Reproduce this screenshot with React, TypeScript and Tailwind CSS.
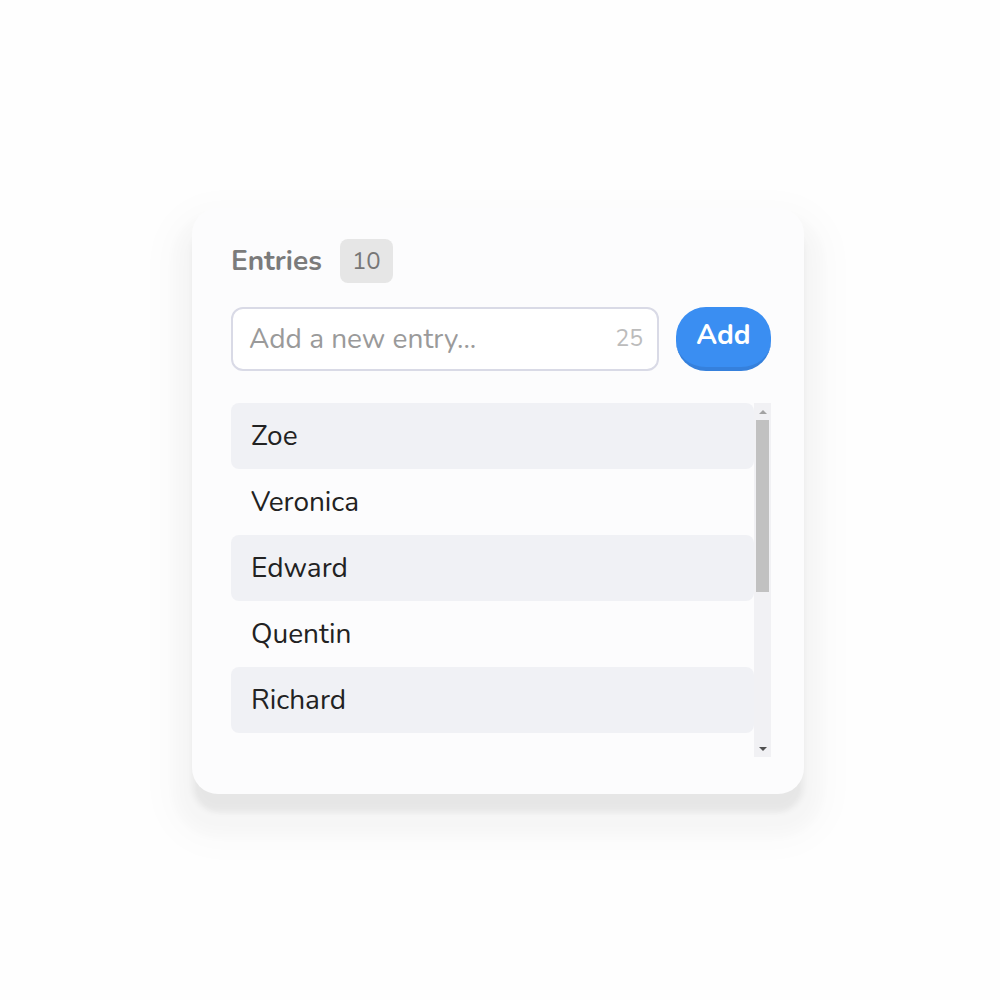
const entries = ['Zoe', 'Veronica', 'Edward', 'Quentin', 'Richard', 'Nina', 'Bruno', 'Clara', 'Dmitri', 'Fiona'];

export default function App() {
  return (
    <div className="w-[1000px] h-[1000px] bg-[#fefefe] pt-[208px] pl-[192px] font-['Nunito','Lato',sans-serif]">
      <div className="w-[612px] h-[586px] bg-[#fcfcfd] rounded-[26px] shadow-[0_18px_6px_rgba(0,0,0,0.055),0_24px_16px_16px_rgba(0,0,0,0.022),0_24px_30px_32px_rgba(0,0,0,0.014)] pl-[39px] pr-[33px] pt-[31px]">
        <div className="flex items-center gap-[18px]">
          <span className="text-[28px] font-bold text-[#7b7b7b] leading-none">Entries</span>
          <span className="h-[44px] w-[53px] rounded-[8px] bg-[#e6e6e6] text-[#777] text-[24px] flex items-center justify-center">10</span>
        </div>
        <div className="flex items-center gap-[17px] mt-[24px]">
          <div className="relative w-[428px] h-[64px]">
            <input
              placeholder="Add a new entry..."
              className="w-full h-full rounded-[12px] border-2 border-[#d9dae6] bg-white pl-[16px] pr-[60px] text-[28px] placeholder:text-[#9a9a9a] outline-none"
            />
            <span className="absolute right-[16px] top-1/2 -translate-y-1/2 text-[23px] text-[#bcbcbc]">25</span>
          </div>
          <button className="w-[95px] h-[64px] rounded-[30px] bg-[#3a8ef2] border-b-4 border-[#3580dc] text-white text-[28px] font-bold pb-[4px]">Add</button>
        </div>
        <div className="mt-[32px] h-[354px] w-[540px] flex items-start">
          <div className="flex-1 h-[340px] overflow-hidden">
            {entries.map((name, i) => (
              <div
                key={name}
                className={`h-[66px] flex items-center pl-[20px] text-[28px] text-[#222] rounded-[8px] ${i % 2 === 0 ? 'bg-[#f0f1f5]' : ''}`}
              >
                {name}
              </div>
            ))}
          </div>
          <div className="w-[17px] h-full bg-[#f1f1f4] flex flex-col items-center">
            <div className="h-[17px] flex items-center justify-center">
              <div className="w-0 h-0 border-x-[4px] border-x-transparent border-b-[4px] border-b-[#a3a3a3]" />
            </div>
            <div className="w-[13px] h-[172px] bg-[#c1c1c1]" />
            <div className="flex-1" />
            <div className="h-[17px] flex items-center justify-center">
              <div className="w-0 h-0 border-x-[4px] border-x-transparent border-t-[4px] border-t-[#505050]" />
            </div>
          </div>
        </div>
      </div>
    </div>
  );
}
